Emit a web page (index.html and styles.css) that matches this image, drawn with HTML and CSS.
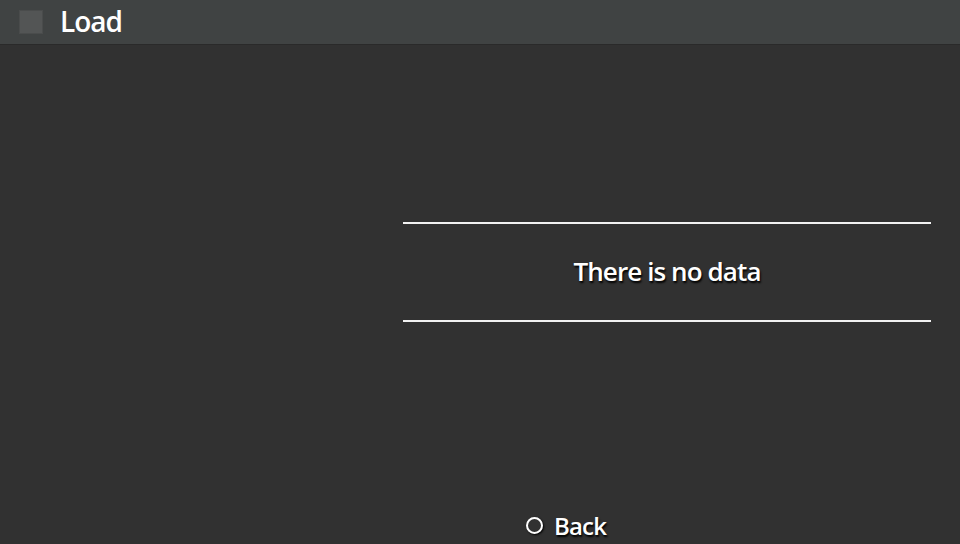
FILE: index.html
```html
<!DOCTYPE html>
<html>
<head>
<meta charset="utf-8">
<link rel="stylesheet" href="styles.css">
</head>
<body>
<div class="screen">
  <header class="topbar">
    <span class="check"></span>
    <span class="title">Load</span>
  </header>
  <main class="content">
    <div class="side"></div>
    <section class="panel">
      <div class="rule"></div>
      <div class="message">There is no data</div>
      <div class="rule"></div>
    </section>
  </main>
  <footer class="footer">
    <span class="circle"></span>
    <span class="back">Back</span>
  </footer>
</div>
</body>
</html>
```
FILE: styles.css
```css
html, body {
  margin: 0;
  padding: 0;
  background: #313131;
}
.screen {
  width: 960px;
  height: 544px;
  display: flex;
  flex-direction: column;
  font-family: "Open Sans", "Noto Sans", sans-serif;
  font-weight: 600;
  color: #fff;
  overflow: hidden;
}
.topbar {
  height: 44px;
  background: #404343;
  border-bottom: 1px solid #2a2a2a;
  display: flex;
  align-items: center;
  padding-left: 19px;
  gap: 17px;
}
.check {
  width: 24px;
  height: 24px;
  background: #535555;
  box-sizing: border-box;
  border: 1px solid #4a4c4c;
}
.title {
  font-size: 28px;
  line-height: 1;
  letter-spacing: -1px;
  transform: translateY(-1px);
}
.content {
  flex: 1;
  display: flex;
}
.side {
  width: 403px;
}
.panel {
  width: 528px;
  padding-top: 177px;
  display: flex;
  flex-direction: column;
}
.rule {
  height: 2px;
  background: #f2f2f2;
}
.message {
  height: 96px;
  display: flex;
  align-items: center;
  justify-content: center;
  font-size: 26px;
  letter-spacing: -0.9px;
  text-shadow: 1px 2px 2px #000;
  transform: translateY(-1px);
}
.footer {
  height: 40px;
  display: flex;
  align-items: center;
  justify-content: center;
  gap: 11px;
  padding-left: 172px;
  padding-top: 2px;
  box-sizing: border-box;
}
.circle {
  width: 13px;
  height: 13px;
  border: 2px solid #fff;
  border-radius: 50%;
  box-shadow: 1px 1px 2px #000;
}
.back {
  font-size: 24px;
  letter-spacing: -0.8px;
  text-shadow: 1px 2px 2px #000;
}
```
